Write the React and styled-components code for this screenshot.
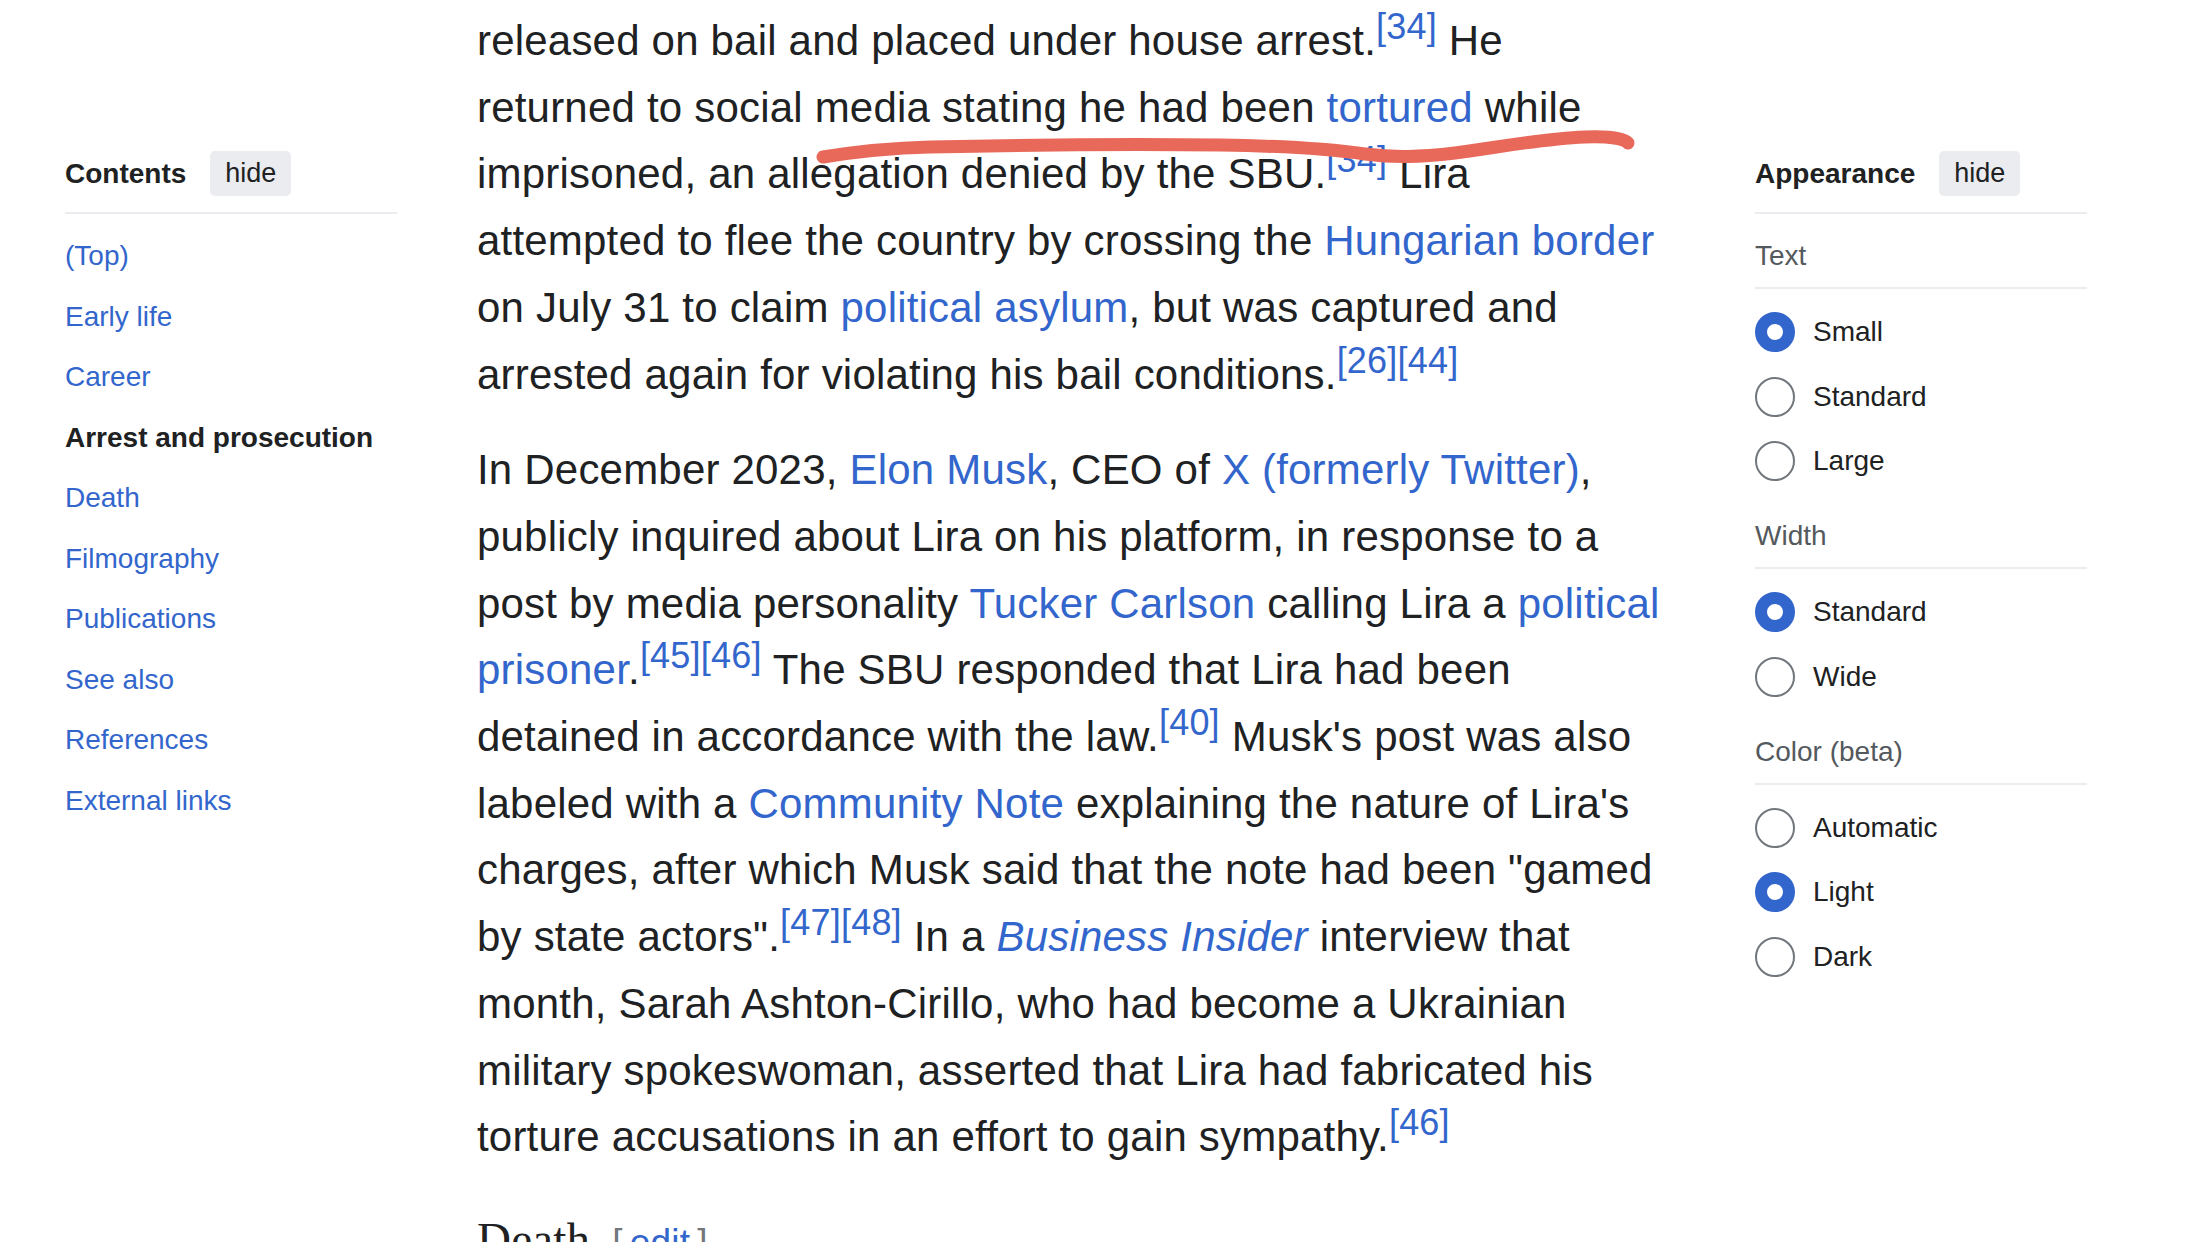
import React from "react";
import styled, { createGlobalStyle } from "styled-components";

const Global = createGlobalStyle`
  html, body { margin: 0; padding: 0; background: #ffffff; }
  body { font-family: "Liberation Sans", Arial, sans-serif; color: #202122; }
  #root { width: 2208px; height: 1242px; overflow: hidden; position: relative; }
`;

const Page = styled.div`
  display: grid;
  grid-template-columns: 332px 1fr 332px;
  column-gap: 80px;
  padding: 0 121px 0 65px;
  height: 1242px;
  box-sizing: border-box;
  position: relative;
`;

const Side = styled.aside`
  padding-top: 151px;
  font-size: 28px;
`;

const PanelHead = styled.div`
  display: flex;
  align-items: center;
  gap: 24px;
  padding-bottom: 16px;
  border-bottom: 2px solid #eaecf0;
`;

const PanelTitle = styled.span`
  font-weight: 700;
  font-size: 28px;
  color: #202122;
`;

const HideButton = styled.button`
  height: 45px;
  padding: 0 15px;
  border: none;
  border-radius: 5px;
  background: #eaecf0;
  color: #202122;
  font-family: inherit;
  font-size: 27px;
  line-height: 45px;
`;

const TocList = styled.ul`
  list-style: none;
  margin: 0;
  padding: 12px 0 0;
`;

const TocItem = styled.li`
  height: 60.5px;
  display: flex;
  align-items: center;
  font-size: 28px;
  color: ${(p) => (p.$active ? "#202122" : "#3366cc")};
  font-weight: ${(p) => (p.$active ? 700 : 400)};
`;

const Section = styled.div`
  padding-top: ${(p) => (p.$first ? "26px" : "26.5px")};
`;

const SectionLabel = styled.div`
  height: 32px;
  line-height: 32px;
  font-size: 28px;
  color: #54595d;
  padding-bottom: 15px;
  border-bottom: 2px solid #eaecf0;
`;

const RadioList = styled.div`
  padding-top: 11px;
`;

const RadioRow = styled.label`
  height: 64.5px;
  display: flex;
  align-items: center;
  gap: 18px;
  font-size: 28px;
  color: #202122;
`;

const RadioDot = styled.span`
  width: 40px;
  height: 40px;
  box-sizing: border-box;
  border-radius: 50%;
  flex: none;
  border: ${(p) => (p.$on ? "12px solid #3366cc" : "2px solid #72777d")};
  background: #ffffff;
`;

const Main = styled.main`
  padding-top: 8px;
  font-size: 42px;
  line-height: 66.7px;
  letter-spacing: 0.2px;
  color: #202122;
`;

const Para = styled.p`
  margin: 0 0 29px;
`;

const Line = styled.span`
  display: block;
  white-space: nowrap;
`;

const A = styled.a`
  color: #3366cc;
  text-decoration: none;
  font-style: ${(p) => (p.$italic ? "italic" : "normal")};
`;

const Ref = styled.sup`
  font-size: 36px;
  line-height: 0;
  vertical-align: 16.5px;
  color: #3366cc;
`;

const Heading = styled.h2`
  margin: 38px 0 0;
  font-family: "Liberation Serif", "Times New Roman", serif;
  font-weight: 400;
  font-size: 47px;
  line-height: 1.3;
  color: #202122;
  display: flex;
  align-items: baseline;
  gap: 22px;
`;

const EditLink = styled.span`
  font-family: "Liberation Sans", Arial, sans-serif;
  font-size: 37px;
  color: #72777d;
  a { color: #3366cc; text-decoration: none; padding: 0 7px; }
`;

const Scribble = styled.svg`
  position: absolute;
  left: 0;
  top: 0;
  width: 2208px;
  height: 1242px;
  pointer-events: none;
`;

const toc = [
  "(Top)",
  "Early life",
  "Career",
  "Arrest and prosecution",
  "Death",
  "Filmography",
  "Publications",
  "See also",
  "References",
  "External links",
];

const appearance = [
  { label: "Text", options: ["Small", "Standard", "Large"], on: 0 },
  { label: "Width", options: ["Standard", "Wide"], on: 0 },
  { label: "Color (beta)", options: ["Automatic", "Light", "Dark"], on: 1 },
];

export default function App() {
  return (
    <>
      <Global />
      <Page>
        <Side>
          <PanelHead>
            <PanelTitle>Contents</PanelTitle>
            <HideButton>hide</HideButton>
          </PanelHead>
          <TocList>
            {toc.map((t) => (
              <TocItem key={t} $active={t === "Arrest and prosecution"}>
                {t}
              </TocItem>
            ))}
          </TocList>
        </Side>

        <Main>
          <Para>
            <Line>
              released on bail and placed under house arrest.<Ref>[34]</Ref> He
            </Line>
            <Line>
              returned to social media stating he had been <A>tortured</A> while
            </Line>
            <Line>
              imprisoned, an allegation denied by the SBU.<Ref>[34]</Ref> Lira
            </Line>
            <Line>
              attempted to flee the country by crossing the <A>Hungarian border</A>
            </Line>
            <Line>
              on July 31 to claim <A>political asylum</A>, but was captured and
            </Line>
            <Line>
              arrested again for violating his bail conditions.<Ref>[26]</Ref>
              <Ref>[44]</Ref>
            </Line>
          </Para>
          <Para>
            <Line>
              In December 2023, <A>Elon Musk</A>, CEO of <A>X (formerly Twitter)</A>,
            </Line>
            <Line>publicly inquired about Lira on his platform, in response to a</Line>
            <Line>
              post by media personality <A>Tucker Carlson</A> calling Lira a <A>political</A>
            </Line>
            <Line>
              <A>prisoner</A>.<Ref>[45]</Ref>
              <Ref>[46]</Ref> The SBU responded that Lira had been
            </Line>
            <Line>
              detained in accordance with the law.<Ref>[40]</Ref> Musk's post was also
            </Line>
            <Line>
              labeled with a <A>Community Note</A> explaining the nature of Lira's
            </Line>
            <Line>charges, after which Musk said that the note had been "gamed</Line>
            <Line>
              by state actors".<Ref>[47]</Ref>
              <Ref>[48]</Ref> In a <A $italic>Business Insider</A> interview that
            </Line>
            <Line>month, Sarah Ashton-Cirillo, who had become a Ukrainian</Line>
            <Line>military spokeswoman, asserted that Lira had fabricated his</Line>
            <Line>
              torture accusations in an effort to gain sympathy.<Ref>[46]</Ref>
            </Line>
          </Para>
          <Heading>
            Death
            <EditLink>
              [<a>edit</a>]
            </EditLink>
          </Heading>
        </Main>

        <Side>
          <PanelHead>
            <PanelTitle>Appearance</PanelTitle>
            <HideButton>hide</HideButton>
          </PanelHead>
          {appearance.map((sec, si) => (
            <Section key={sec.label} $first={si === 0}>
              <SectionLabel>{sec.label}</SectionLabel>
              <RadioList>
                {sec.options.map((o, oi) => (
                  <RadioRow key={o}>
                    <RadioDot $on={oi === sec.on} />
                    {o}
                  </RadioRow>
                ))}
              </RadioList>
            </Section>
          ))}
        </Side>

        <Scribble viewBox="0 0 2208 1242">
          <path
            d="M 823 157 C 860 151 890 148 930 147 C 1020 145 1120 144 1220 145 C 1290 146 1330 149 1365 154 C 1395 158 1420 157 1455 153 C 1500 147 1540 139 1585 137 C 1610 136 1625 139 1628 143"
            fill="none"
            stroke="#e8695a"
            strokeWidth="13"
            strokeLinecap="round"
            strokeLinejoin="round"
          />
        </Scribble>
      </Page>
    </>
  );
}
